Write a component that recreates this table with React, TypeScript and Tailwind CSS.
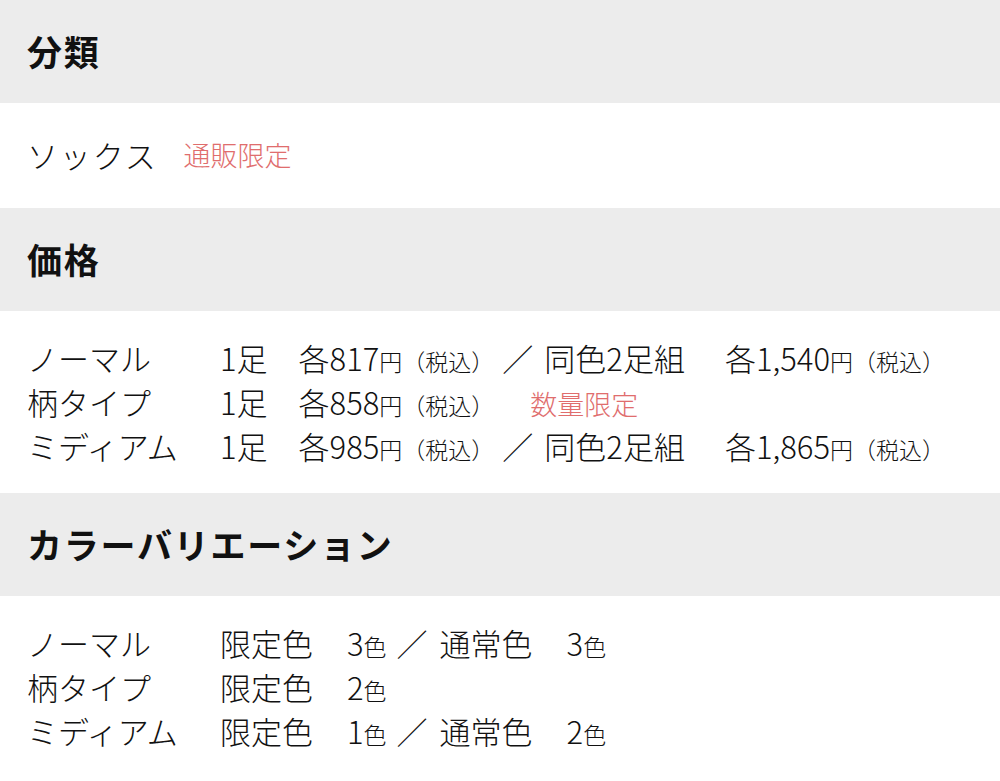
const font = { fontFamily: '"Noto Sans CJK JP", "Noto Sans", sans-serif' };

function Heading({ children }: { children: React.ReactNode }) {
  return (
    <div className="h-[103px] bg-[#ececec] flex items-center px-[27px]">
      <h2 className="text-[35px] font-bold tracking-[0.05em] text-[#111]">{children}</h2>
    </div>
  );
}

function Small({ children }: { children: React.ReactNode }) {
  return <span className="text-[23px]">{children}</span>;
}

const priceRows = [
  { label: 'ノーマル', one: '817', pair: '1,540' },
  { label: '柄タイプ', one: '858', pair: null },
  { label: 'ミディアム', one: '985', pair: '1,865' },
];

const colorRows = [
  { label: 'ノーマル', limited: '3', normal: '3' },
  { label: '柄タイプ', limited: '2', normal: null },
  { label: 'ミディアム', limited: '1', normal: '2' },
];

export default function App() {
  return (
    <div className="w-[1000px] min-h-[781px] bg-white text-[#111] font-light" style={font}>
      <Heading>分類</Heading>
      <div className="h-[105px] flex items-center px-[27px]">
        <span className="text-[31px] tracking-[0.06em]">ソックス</span>
        <span className="ml-[26px] text-[27px] text-[#e06d6d]">通販限定</span>
      </div>

      <Heading>価格</Heading>
      <div className="py-[25px] px-[27px]">
        {priceRows.map((r) => (
          <div key={r.label} className="flex items-baseline h-[44px] leading-[44px] text-[31px] whitespace-nowrap">
            <span className="w-[193px] shrink-0">{r.label}</span>
            <span>1足</span>
            <span className="ml-[31px]">
              各{r.one}
              <Small>円（税込）</Small>
            </span>
            {r.pair ? (
              <>
                <span className="ml-[8px]">／</span>
                <span className="ml-[11px]">同色2足組</span>
                <span className="ml-[40px]">
                  各{r.pair}
                  <Small>円（税込）</Small>
                </span>
              </>
            ) : (
              <span className="ml-[36px] text-[27px] text-[#e06d6d]">数量限定</span>
            )}
          </div>
        ))}
      </div>

      <Heading>カラーバリエーション</Heading>
      <div className="py-[25px] px-[27px]">
        {colorRows.map((r) => (
          <div key={r.label} className="flex items-baseline h-[44px] leading-[44px] text-[31px] whitespace-nowrap">
            <span className="w-[193px] shrink-0">{r.label}</span>
            <span>限定色</span>
            <span className="ml-[34px]">
              {r.limited}
              <Small>色</Small>
            </span>
            {r.normal && (
              <>
                <span className="ml-[10px]">／</span>
                <span className="ml-[12px]">通常色</span>
                <span className="ml-[34px]">
                  {r.normal}
                  <Small>色</Small>
                </span>
              </>
            )}
          </div>
        ))}
      </div>
    </div>
  );
}
